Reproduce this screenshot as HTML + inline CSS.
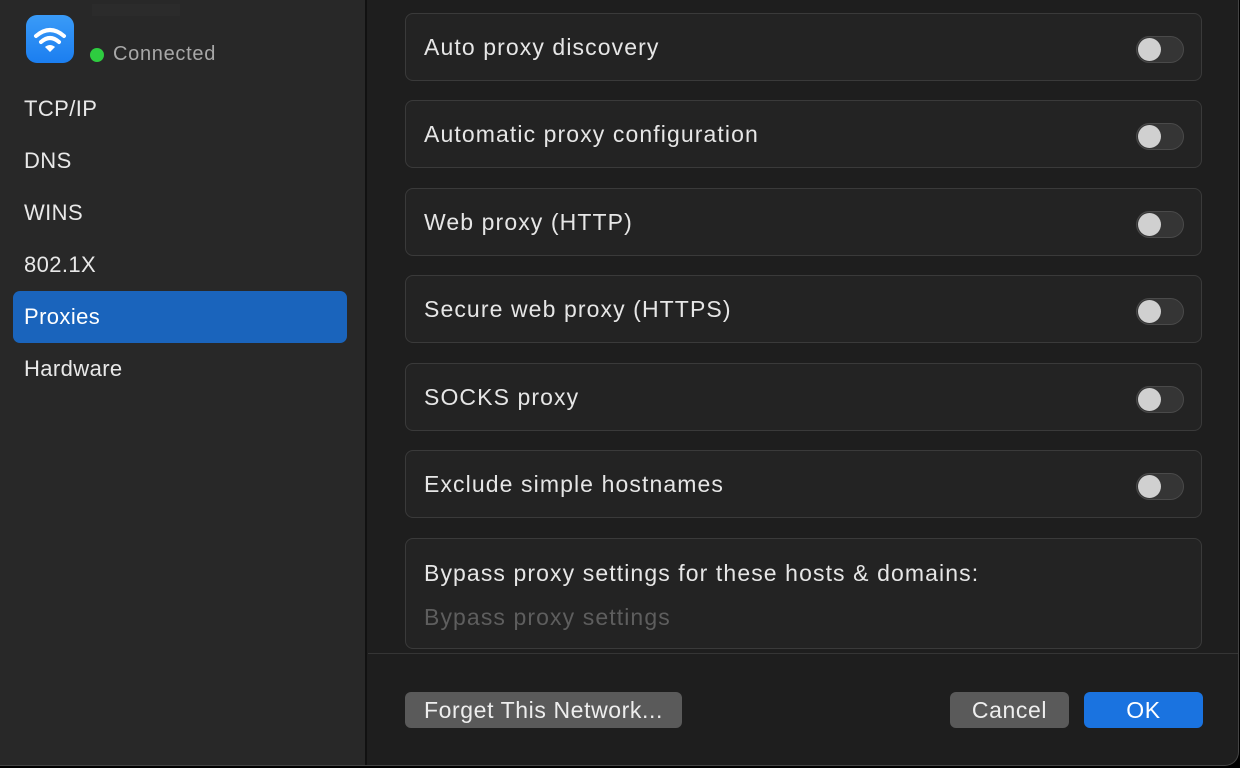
<!DOCTYPE html>
<html><head><meta charset="utf-8"><style>
*{box-sizing:border-box;margin:0;padding:0}
body{width:1240px;height:768px;background:#000;font-family:"Liberation Sans",sans-serif;overflow:hidden;position:relative}
.win{position:absolute;left:0;top:0;width:1239px;height:766px;background:#1e1e1e;border-bottom-right-radius:14px;overflow:hidden;border-right:1px solid #444;border-bottom:1px solid #444}
.side{position:absolute;left:0;top:0;width:367px;height:768px;background:#282828;border-right:2px solid #111}
.icon{position:absolute;left:26px;top:15px;width:48px;height:48px;border-radius:11px;background:linear-gradient(#3a9bf7,#1b7ef0)}
.name{position:absolute;left:92px;top:4px;width:88px;height:12px;background:#2b2b2b}
.conn{position:absolute;left:113px;top:43px;color:#a8a8a8;font-size:20px;letter-spacing:0.7px}
.dot{position:absolute;left:90px;top:48px;width:14px;height:14px;border-radius:50%;background:#2ecc40}
.item{position:absolute;left:24px;color:#e8e8e8;font-size:22px;letter-spacing:0.4px}
.sel{position:absolute;left:13px;top:291px;width:334px;height:52px;background:#1a64bc;border-radius:7px}
.card{position:absolute;left:405px;width:797px;height:68px;background:#232323;border:1.5px solid #3a3a3a;border-radius:8px}
.card span{position:absolute;left:18px;top:20px;color:#e6e6e6;font-size:23px;letter-spacing:1.1px}
.tg{position:absolute;left:730px;top:22px;width:48px;height:27px;border-radius:14px;background:#353535;border:1px solid #4a4a4a}
.tg:after{content:"";position:absolute;left:1px;top:1px;width:23px;height:23px;border-radius:50%;background:#d0d0d0}
.sep{position:absolute;left:368px;top:653px;width:872px;height:1px;background:#353535}
.btn{position:absolute;top:692px;height:36px;border-radius:6px;background:#5a5a5a;color:#eee;font-size:23px;letter-spacing:0.6px;text-align:center;line-height:36px}
</style></head><body>
<div class="win">
<div class="side">
<div class="icon"><svg width="48" height="48" viewBox="0 0 48 48"><g fill="none" stroke="#fff" stroke-width="4" stroke-linecap="round"><path d="M10 21 Q24 9 38 21"/><path d="M15 27 Q24 19 33 27"/></g><path d="M19 32 Q24 28 29 32 L24 37 Z" fill="#fff"/></svg></div>
<div class="name"></div>
<div class="dot"></div><div class="conn">Connected</div>
<div class="item" style="top:96px">TCP/IP</div>
<div class="item" style="top:148px">DNS</div>
<div class="item" style="top:200px">WINS</div>
<div class="item" style="top:252px">802.1X</div>
<div class="sel"></div>
<div class="item" style="top:304px;color:#fff">Proxies</div>
<div class="item" style="top:356px">Hardware</div>
</div>
<div class="card" style="top:13px"><span>Auto proxy discovery</span><div class="tg"></div></div>
<div class="card" style="top:100px"><span>Automatic proxy configuration</span><div class="tg"></div></div>
<div class="card" style="top:188px"><span>Web proxy (HTTP)</span><div class="tg"></div></div>
<div class="card" style="top:275px"><span>Secure web proxy (HTTPS)</span><div class="tg"></div></div>
<div class="card" style="top:363px"><span>SOCKS proxy</span><div class="tg"></div></div>
<div class="card" style="top:450px"><span>Exclude simple hostnames</span><div class="tg"></div></div>
<div class="card" style="top:538px;height:111px"><span style="top:21px">Bypass proxy settings for these hosts &amp; domains:</span><span style="top:65px;color:#5e5e5e">Bypass proxy settings</span></div>
<div class="sep"></div>
<div class="btn" style="left:405px;width:277px">Forget This Network...</div>
<div class="btn" style="left:950px;width:119px">Cancel</div>
<div class="btn" style="left:1084px;width:119px;background:#1a73e0;color:#fff">OK</div>
</div>
</body></html>
